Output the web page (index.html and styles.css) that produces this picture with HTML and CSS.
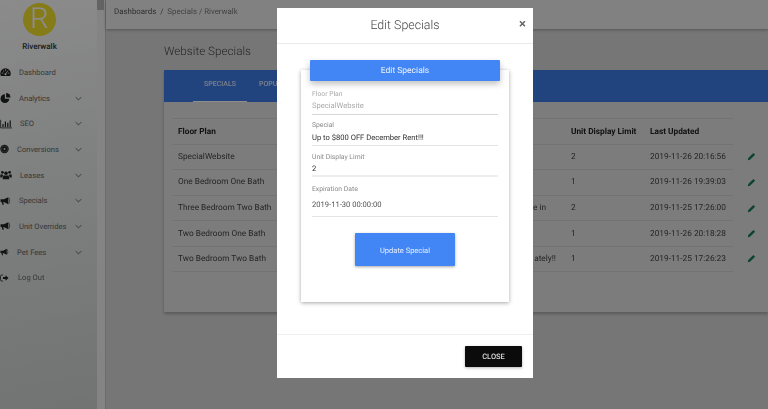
FILE: index.html
```html
<!DOCTYPE html>
<html lang="en">
<head>
<meta charset="utf-8">
<title>Website Specials</title>
<link rel="stylesheet" href="styles.css">
</head>
<body>
<svg class="defs" width="0" height="0" aria-hidden="true">
  <symbol id="i-gauge" viewBox="0 0 20 16"><path d="M10 1a9.500 9.500 0 0 0-9.500 9.500c0 1.800.5 3.400 1.300 4.800h16.400c.8-1.400 1.300-3 1.300-4.800A9.500 9.500 0 0 0 10 1z" fill="currentColor"/><path d="M3 10h3M14 10h3M5.500 5.500l2 2M10 3v3M14.500 5.500L10.500 11" stroke="#fff" stroke-width="1.300" fill="none"/><circle cx="10" cy="12" r="1.800" fill="#fff"/></symbol>
  <symbol id="i-pie" viewBox="0 0 16 16"><path d="M7 2a7 7 0 1 0 7 7H7z" fill="currentColor"/><path d="M9 0a7 7 0 0 1 7 7H9z" fill="currentColor"/></symbol>
  <symbol id="i-bars" viewBox="0 0 20 16"><path d="M1 1v13.500h19" stroke="currentColor" stroke-width="1.300" fill="none"/><path d="M4 8h2v5H4zM8 4h2v9H8zM12 6h2v7h-2zM16 2h2v11h-2z" fill="currentColor"/></symbol>
  <symbol id="i-target" viewBox="0 0 16 16"><circle cx="8" cy="8" r="7.500" fill="currentColor"/><circle cx="8" cy="8" r="5.500" fill="none" stroke="#999" stroke-width=".8"/><circle cx="8" cy="8" r="1.800" fill="#ddd"/></symbol>
  <symbol id="i-users" viewBox="0 0 20 16"><g fill="currentColor"><circle cx="10" cy="5" r="3"/><circle cx="4" cy="3.500" r="2.300"/><circle cx="16" cy="3.500" r="2.300"/><path d="M5.500 9h9l1 6h-11zM.5 7h4.500l-.9 5H.5zM15 7h4.500v5h-3.600z"/></g></symbol>
  <symbol id="i-horn" viewBox="0 0 20 16"><g fill="currentColor"><path d="M1 5h6v5H1zM3 10h3l1 5H4.500zM7 5l8-4v13l-8-4z"/></g><path d="M16 2q3 5.500 0 11" stroke="currentColor" stroke-width="1.200" fill="none"/></symbol>
  <symbol id="i-out" viewBox="0 0 18 16"><path d="M6 2H3.500A2.500 2.500 0 0 0 1 4.500v7A2.500 2.500 0 0 0 3.500 14H6" stroke="currentColor" stroke-width="1.600" fill="none"/><path d="M6 6h5V2.500L17 8l-6 5.500V10H6z" fill="currentColor"/></symbol>
  <symbol id="i-chev" viewBox="0 0 10 6"><path d="M1 1l4 4 4-4" stroke="currentColor" stroke-width="1.100" fill="none"/></symbol>
  <symbol id="i-pen" viewBox="0 0 12 12"><path d="M8.500 1.200l2.300 2.300-6.800 6.800-3 .7.700-3z" fill="currentColor"/></symbol>
</svg>

<div class="app">
  <aside class="sidebar">
    <div class="logo">R</div>
    <div class="brand">Riverwalk</div>
    <nav class="nav">
      <a class="nav-item"><svg class="nav-icon"><use href="#i-gauge"/></svg><span>Dashboard</span></a>
      <a class="nav-item"><svg class="nav-icon"><use href="#i-pie"/></svg><span>Analytics</span><svg class="chev"><use href="#i-chev"/></svg></a>
      <a class="nav-item"><svg class="nav-icon nav-icon-wide"><use href="#i-bars"/></svg><span>SEO</span><svg class="chev"><use href="#i-chev"/></svg></a>
      <a class="nav-item"><svg class="nav-icon nav-icon-tight"><use href="#i-target"/></svg><span>Conversions</span><svg class="chev"><use href="#i-chev"/></svg></a>
      <a class="nav-item"><svg class="nav-icon nav-icon-wide"><use href="#i-users"/></svg><span>Leases</span><svg class="chev"><use href="#i-chev"/></svg></a>
      <a class="nav-item"><svg class="nav-icon"><use href="#i-horn"/></svg><span>Specials</span><svg class="chev"><use href="#i-chev"/></svg></a>
      <a class="nav-item"><svg class="nav-icon"><use href="#i-horn"/></svg><span>Unit Overrides</span><svg class="chev"><use href="#i-chev"/></svg></a>
      <a class="nav-item"><svg class="nav-icon nav-icon-tight"><use href="#i-horn"/></svg><span>Pet Fees</span><svg class="chev"><use href="#i-chev"/></svg></a>
      <a class="nav-item"><svg class="nav-icon nav-icon-log"><use href="#i-out"/></svg><span>Log Out</span></a>
    </nav>
  </aside>
  <div class="rail"><div class="rail-thumb"></div></div>
  <main class="main">
    <header class="topbar">Dashboards &nbsp;/&nbsp; <span class="crumb">Specials / Riverwalk</span></header>
    <section class="content">
      <h1 class="page-title">Website Specials</h1>
      <div class="card">
        <div class="tabs"><span class="tab tab-active">SPECIALS</span><span class="tab">POPUPS</span></div>
        <div class="table">
          <div class="row row-head"><span>Floor Plan</span><span></span><span>Unit Display Limit</span><span>Last Updated</span><span></span></div>
          <div class="row"><span>SpecialWebsite</span><span></span><span>2</span><span>2019-11-26 20:16:56</span><svg class="pen"><use href="#i-pen"/></svg></div>
          <div class="row"><span>One Bedroom One Bath</span><span></span><span>1</span><span>2019-11-26 19:39:03</span><svg class="pen"><use href="#i-pen"/></svg></div>
          <div class="row"><span>Three Bedroom Two Bath</span><span class="tail tail-short">e in</span><span>2</span><span>2019-11-25 17:26:00</span><svg class="pen"><use href="#i-pen"/></svg></div>
          <div class="row"><span>Two Bedroom One Bath</span><span></span><span>1</span><span>2019-11-26 20:18:28</span><svg class="pen"><use href="#i-pen"/></svg></div>
          <div class="row"><span>Two Bedroom Two Bath</span><span class="tail">ately!!</span><span>1</span><span>2019-11-25 17:26:23</span><svg class="pen"><use href="#i-pen"/></svg></div>
        </div>
      </div>
    </section>
  </main>
</div>

<div class="backdrop"></div>

<div class="modal">
  <div class="modal-head">
    <h2 class="modal-title">Edit Specials</h2>
    <span class="modal-x">×</span>
  </div>
  <div class="modal-body">
    <div class="form-card">
      <div class="form-banner">Edit Specials</div>
      <div class="field field-plan field-muted"><label>Floor Plan</label><div class="value">SpecialWebsite</div></div>
      <div class="field field-special"><label>Special</label><div class="value">Up to $800 OFF December Rent!!!</div></div>
      <div class="field field-limit"><label>Unit Display Limit</label><div class="value">2</div></div>
      <div class="field field-date"><label>Expiration Date</label><div class="value">2019-11-30 00:00:00</div></div>
      <button class="update-btn">Update Special</button>
    </div>
  </div>
  <div class="modal-foot"><button class="close-btn">CLOSE</button></div>
</div>
</body>
</html>
```
FILE: styles.css
```css
* { box-sizing: border-box; }
html, body { margin: 0; height: 100%; overflow: hidden; }
body { font-family: Roboto, "Liberation Sans", sans-serif; color: #333; background: #d8d8d8; text-rendering: geometricPrecision; }
.defs { position: absolute; }

.app { display: flex; height: 409px; filter: blur(.35px); }

.sidebar { width: 97px; flex: none; background: linear-gradient(170deg, #fdfdfd 0%, #e6e8e8 45%, #cfd2d2 100%); }
.logo { width: 33px; height: 33px; margin: 3px 0 0 23px; border-radius: 50%; background: #f5e12f; color: #fff; font-size: 29px; font-weight: 300; line-height: 33px; text-align: center; }
.brand { margin: 6px 0 0; width: 79px; text-align: center; font-size: 8px; font-weight: 500; color: #333; }
.nav { margin-top: 8.500px; }
.nav-item { display: flex; align-items: center; height: 25.700px; font-size: 7.600px; color: #666; }
.nav-icon { flex: none; width: 11px; height: 10px; margin-right: 8px; color: #222; }
.nav-icon-wide { width: 12px; }
.nav-icon-tight { width: 9px; }
.nav-icon-log { width: 9px; margin-right: 9px; }
.chev { width: 7px; height: 5px; margin-left: auto; margin-right: 15px; color: #444; flex: none; }

.rail { width: 8px; flex: none; background: #f1f1f1; }
.rail-thumb { width: 7px; height: 10px; background: #b5b5b5; }

.main { flex: 1; min-width: 0; display: flex; flex-direction: column; border-left: 1px solid #c4c4c4; }
.topbar { height: 29px; flex: none; padding: 7px 0 0 8px; font-size: 7.900px; color: #555; background: #ececec; box-shadow: 0 1px 3px rgba(0,0,0,.3); }
.crumb { color: #777; }
.content { flex: 1; padding: 14px 0 0 58px; }
.page-title { margin: 0 0 11px; font-size: 11.700px; line-height: 16px; font-weight: 300; color: #444; }

.card { background: #e2e2e2; height: 242px; box-shadow: 0 2px 3px rgba(0,0,0,.25); }
.tabs { height: 32px; display: flex; background: #3d7ae6; color: #dfe8fb; font-size: 7px; font-weight: 500; }
.tab { padding-top: 10px; }
.tab-active { width: 54px; margin-left: 29px; margin-right: 12px; text-align: center; border-bottom: 1px solid #fff; }

.table { padding: 16px 35px 0 8px; }
.row { display: grid; grid-template-columns: 150px 243px 79px 97px 1fr; align-items: center; height: 25.600px; padding-left: 6px; border-top: 1px solid #d2d2d2; font-size: 8.300px; color: #444; }
.row:last-child { border-bottom: 1px solid #d2d2d2; }
.row-head { font-weight: 700; color: #222; padding-top: 1px; }
.tail { text-align: right; padding-right: 15px; }
.tail-short { padding-right: 25px; }
.pen { width: 9px; height: 9px; color: #17795f; }

.backdrop { position: fixed; inset: 0; background: rgba(0,0,0,.45); }

.modal { position: fixed; left: 277px; top: 8px; width: 256px; height: 370px; background: #fff; display: flex; flex-direction: column; filter: blur(.35px); }
.modal-head { height: 36px; flex: none; position: relative; border-bottom: 1px solid #eaeaea; display: flex; align-items: center; justify-content: center; }
.modal-title { margin: 0; font-size: 12.400px; font-weight: 300; color: #444; }
.modal-x { position: absolute; right: 7px; top: 9px; font-size: 13px; font-weight: 700; color: #666; line-height: 16px; }
.modal-body { flex: 1; padding: 26px 24px 0; }
.form-card { position: relative; height: 232px; padding: 15px 11px 0; box-shadow: 0 1px 4px rgba(0,0,0,.35); }
.form-banner { position: absolute; left: 9px; right: 9px; top: -10px; height: 21px; padding-top: 1px; border-radius: 1px; background: #4285f4; color: #f0f5ff; font-size: 8.500px; line-height: 21px; text-align: center; box-shadow: 0 3px 6px rgba(0,0,0,.25); }
.field { border-bottom: 1px solid #e4e4e4; }
.field label { display: block; font-size: 6.800px; line-height: 10px; color: #888; }
.value { font-size: 7.600px; line-height: 12px; color: #333; }
.field-plan { padding-top: 3.500px; height: 30px; border-bottom-color: #d8d8d8; }
.field-plan .value { margin-top: 1.500px; }
.field-muted label, .field-muted .value { color: #aaa; }
.field-special { padding-top: 5px; height: 31px; }
.field-special .value { margin-top: 1.500px; }
.field-limit { padding-top: 6px; height: 31px; border-bottom-width: 2px; border-bottom-color: #eee; }
.field-limit .value { margin-top: 1px; }
.field-date { padding-top: 7px; height: 40px; }
.field-date .value { margin-top: 5px; color: #555; }
.update-btn { display: block; width: 100px; height: 33px; margin: 16px auto 0; padding: 2px 0 0; border: 0; border-radius: 1px; background: #4285f4; color: #e8f0ff; font: 400 7.500px Roboto, sans-serif; text-rendering: geometricPrecision; box-shadow: 0 1px 3px rgba(0,0,0,.35); }

.modal-foot { height: 44px; flex: none; border-top: 1px solid #f0f0f0; padding: 11px 11px 0 0; display: flex; justify-content: flex-end; align-items: flex-start; }
.close-btn { width: 57px; height: 21px; border: 0; border-radius: 1px; background: #0b0b0b; color: #ddd; font: 500 7.500px Roboto, sans-serif; text-rendering: geometricPrecision; box-shadow: 0 1px 3px rgba(0,0,0,.3); }
```
